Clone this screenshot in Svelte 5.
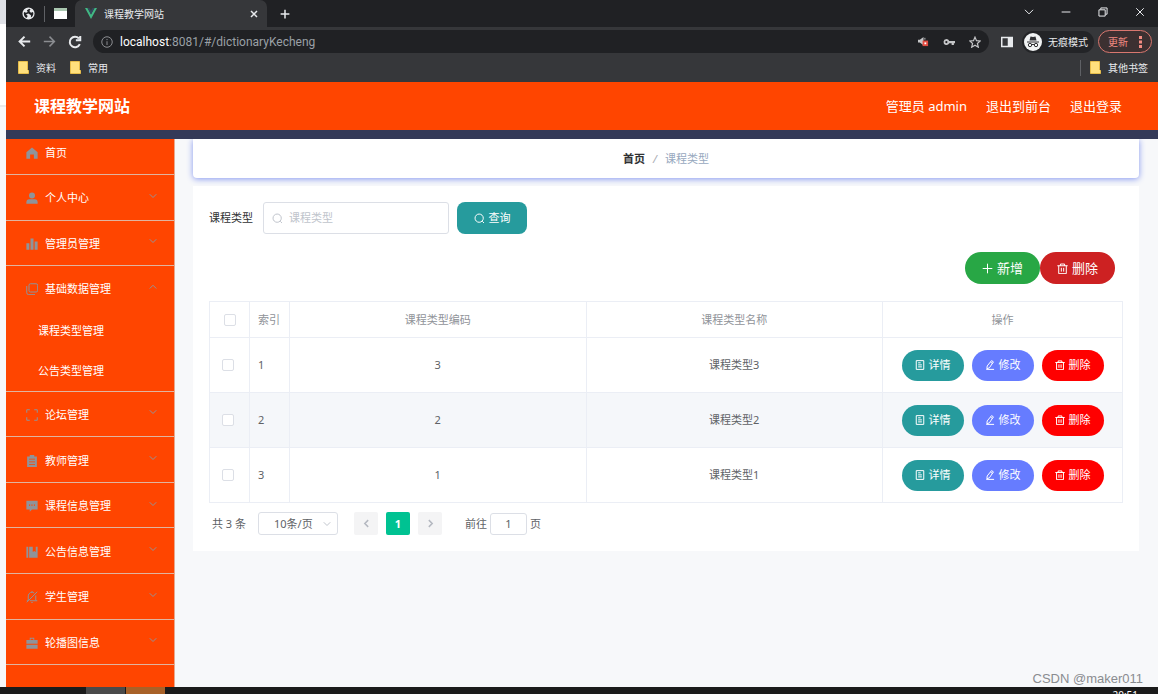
<script>
  const menu = [
    { label: '个人中心', icon: 'user' },
    { label: '管理员管理', icon: 'bars' },
    { label: '基础数据管理', icon: 'copy', children: ['课程类型管理', '公告类型管理'] },
    { label: '论坛管理', icon: 'frame' },
    { label: '教师管理', icon: 'clipboard' },
    { label: '课程信息管理', icon: 'chat' },
    { label: '公告信息管理', icon: 'book' },
    { label: '学生管理', icon: 'bell' },
    { label: '轮播图信息', icon: 'case' }
  ];
  const rows = [
    { index: 1, code: 3, name: '课程类型3' },
    { index: 2, code: 2, name: '课程类型2' },
    { index: 3, code: 1, name: '课程类型1' }
  ];
  // 16-unit grid; solid shapes are filled, the others are stroked
  const icons = {
    home: { solid: true, d: 'M8 .5 15.500 7V15.500H10.500V10H5.500V15.500H.5V7Z' },
    user: { solid: true, d: 'M8 .5a4 4 0 1 1 0 8 4 4 0 0 1 0-8ZM.5 15.500v-2q0-4 4-4h7q4 0 4 4v2Z' },
    bars: { solid: true, d: 'M.5 7H4.500v8.500H.5ZM6 .5h4v15H6ZM11.500 4.500h4v11h-4Z' },
    copy: { d: 'M6 1h7.500a2 2 0 0 1 2 2v7a2 2 0 0 1-2 2H6a2 2 0 0 1-2-2V3a2 2 0 0 1 2-2ZM1 4v9a2.500 2.500 0 0 0 2.500 2.500H12' },
    frame: { d: 'M1 5V1h4M11 1h4v4M15 11v4h-4M5 15H1v-4' },
    clipboard: { solid: true, d: 'M5 0h6v2h3.500v14h-13V2H5ZM4 5v1h8V5ZM4 8.500v1h8v-1ZM4 12v1h8v-1Z' },
    chat: { solid: true, d: 'M.5 1h15v11.500H8L5 15.500v-3H.5ZM4 6v1.500h1.500V6ZM7.200 6v1.500h1.500V6ZM10.500 6v1.500H12V6Z' },
    book: { solid: true, d: 'M.5 1H3v14.500H.5ZM4.200 1H9v7l2-1.500L13 8V1h2.500v14.500H4.200Z' },
    bell: { d: 'M1 15 15 1M3 12V6.500a5 5 0 0 1 8-3.800M13 6v7H5M1 13h2M13 13h2M7 15.500h2M8 0v1.500' },
    case: { solid: true, d: 'M5 1h6v3h4.500v5H.5V4H5ZM6.200 2.200V4h3.600V2.200ZM.5 10.200h15V15.500H.5Z' },
    search: { d: 'M7.500 1.500a6 6 0 1 1 0 12 6 6 0 0 1 0-12ZM12 12l2.500 2.500' },
    plus: { d: 'M8 1v14M1 8h14' },
    trash: { d: 'M.5 4h15M5 4V1.500h6V4M2.500 4v11.500h11V4M6.300 7v5.500M9.700 7v5.500' },
    doc: { d: 'M2 1h12v14H2ZM5 4.500h4M5 7.800h6M5 11h6' },
    edit: { d: 'M10.500 1 13.500 3 7 12.500 3 14l.5-4.500ZM2 15h12.500M9 3.500l3 2' },
    down: { d: 'M1.500 4.500 8 11l6.500-6.500' },
    up: { d: 'M1.500 11 8 4.500l6.500 6.500' },
    left: { d: 'M11 2 5 8l6 6' },
    right: { d: 'M5 2l6 6-6 6' },
    back: { d: 'M15 8H2M8 2 2 8l6 6' },
    forward: { d: 'M1 8h13M8 2l6 6-6 6' },
    reload: { d: 'M13.500 10.500A6 6 0 1 1 12.500 4M14 1v5H9' },
    close: { d: 'M2 2l12 12M14 2 2 14' },
    minus: { d: 'M1 8h14' },
    restore: { d: 'M1.500 4.500h10v10h-10ZM4.500 4V1.500h10v10H12' },
    info: { d: 'M8 1a7 7 0 1 1 0 14A7 7 0 0 1 8 1ZM8 7v5M8 4v1.500' },
    star: { d: 'M8 1.500l2 4.700 5 .4-3.800 3.300 1.200 5L8 12.200l-4.400 2.700 1.200-5L1 6.600l5-.4Z' },
    key: { solid: true, d: 'M4.500 4a4 4 0 0 1 3.800 2.700H16v3h-1.500V12h-3V9.700H8.300A4 4 0 1 1 4.500 4ZM4.500 6.500a1.500 1.500 0 1 0 0 3 1.500 1.500 0 0 0 0-3Z' },
    panel: { solid: true, d: 'M0 1h16v14H0ZM2 3v10h7V3Z' },
    globe: { solid: true, d: 'M8 .5a7.500 7.500 0 1 1 0 15 7.500 7.500 0 0 1 0-15ZM9 2l-3 2 1 2-2 1-2.500-1C1.500 9 3 12 5.500 13.500L7 11 5 9l3-1 3 2v3c3-2 3.500-5 2.500-7L11 7 9 5l1.500-2Z' }
  };
  let keyword = $state('');
  let size = $state('10条/页');
  let page = $state('1');
</script>

{#snippet icon(name, px = 12, weight = 1)}
  <svg class="icon" width={px} height={px} viewBox="0 0 16 16" aria-hidden="true"
    fill={icons[name].solid ? 'currentColor' : 'none'}
    stroke={icons[name].solid ? 'none' : 'currentColor'}
    stroke-width={(weight * 16) / px} fill-rule="evenodd"><path d={icons[name].d} /></svg>
{/snippet}

{#snippet folder()}
  <svg class="icon" width="11" height="13" viewBox="0 0 11 13" aria-hidden="true"><path d="M.5.500h9v8l1 1v3H.5Z" fill="#ffe07d" stroke="#e7bd4a" /></svg>
{/snippet}

<div class="screen">
  <div class="desk">
    <div class="behind"><i></i><b></b></div>
    <div class="window">
      <div class="tabs">
        <div class="pins">
          {@render icon('globe', 13)}
          <span class="rule"></span>
          <svg width="13" height="11" viewBox="0 0 13 11" aria-hidden="true"><path fill="#fff" d="M0 0h13v11H0Z" /><path fill="#a9c7b0" d="M0 0h13v3H0Z" /></svg>
        </div>
        <div class="tab">
          <svg width="12" height="11" viewBox="0 0 12 11" aria-hidden="true"><path fill="#41b883" d="M0 0h2.500L6 6.500 9.500 0H12L6 11Z" /><path fill="#34495e" d="M2.500 0h2L6 2.700 7.500 0h2L6 6.500Z" /></svg>
          <span>课程教学网站</span>
          <button aria-label="关闭标签页">{@render icon('close', 8, 1.5)}</button>
        </div>
        <button class="newtab" aria-label="新标签页">{@render icon('plus', 10, 1.5)}</button>
        <div class="winctl">
          <button aria-label="搜索标签页">{@render icon('down', 10)}</button>
          <button aria-label="最小化">{@render icon('minus', 10)}</button>
          <button aria-label="还原">{@render icon('restore', 10)}</button>
          <button aria-label="关闭">{@render icon('close', 10)}</button>
        </div>
      </div>
      <div class="toolbar">
        <button aria-label="后退">{@render icon('back', 13, 2)}</button>
        <button class="dim" aria-label="前进">{@render icon('forward', 13, 1.5)}</button>
        <button aria-label="刷新">{@render icon('reload', 14, 2)}</button>
        <div class="url">
          <span class="dim">{@render icon('info', 12)}</span>
          <span class="addr">localhost<em>:8081/#/dictionaryKecheng</em></span>
          <svg width="11" height="11" viewBox="0 0 12 12" aria-hidden="true"><path d="M0 4h2l4-3v9L2 7H0Z" fill="#c5c6c8" /><path d="M7.500 2v2" stroke="#c5c6c8" /><path fill="#e24b40" d="M5 5h6v6H5Z" /><path fill="#fff" d="M7 7h2v2H7Z" /></svg>
          {@render icon('key', 12)}
          {@render icon('star', 12, 1.2)}
        </div>
        <span class="panel">{@render icon('panel', 12)}</span>
        <div class="incog">
          <svg width="18" height="18" viewBox="0 0 18 18" aria-hidden="true"><circle cx="9" cy="9" r="9" fill="#f1f3f4" /><path fill="#303134" d="M6.500 3.500 9 4l2.500-.5 1 4h-7ZM3 8.500h12v1H3Z" /><g fill="none" stroke="#303134"><circle cx="6" cy="12" r="1.700" /><circle cx="12" cy="12" r="1.700" /><path d="M7.700 11.500h2.600" /></g></svg>
          <span>无痕模式</span>
        </div>
        <button class="update">更新<svg width="3" height="12" viewBox="0 0 3 12" aria-hidden="true"><path fill="currentColor" d="M0 0h3v3H0ZM0 4.500h3v3H0ZM0 9h3v3H0Z" /></svg></button>
      </div>
      <div class="marks">
        <a href="#a">{@render folder()}资料</a>
        <a href="#b">{@render folder()}常用</a>
        <a class="other" href="#c">{@render folder()}其他书签</a>
      </div>

      <header>
        <h1>课程教学网站</h1>
        <span>管理员 admin</span>
        <a href="#front">退出到前台</a>
        <a href="#logout">退出登录</a>
      </header>

      <div class="body">
        <nav>
          <a class="first" href="#home">{@render icon('home')}<span>首页</span></a>
          {#each menu as item}
            <button class="item" class:open={item.children}>
              {@render icon(item.icon)}<span>{item.label}</span>
              {@render icon(item.children ? 'up' : 'down', 8)}
            </button>
            {#if item.children}
              <div class="sub">
                {#each item.children as child}<a href="#sub">{child}</a>{/each}
              </div>
            {/if}
          {/each}
          <div class="tail"></div>
        </nav>

        <main>
          <div class="crumbs"><strong>首页</strong><i>/</i><span>课程类型</span></div>
          <section>
            <div class="query">
              <label for="kw">课程类型</label>
              <div class="field">{@render icon('search', 11)}<input id="kw" placeholder="课程类型" bind:value={keyword} /></div>
              <button class="find">{@render icon('search', 11)}查询</button>
            </div>
            <div class="actions">
              <button class="add">{@render icon('plus', 11)}新增</button>
              <button class="del">{@render icon('trash', 11)}删除</button>
            </div>
            <table>
              <colgroup><col class="c1" /><col class="c1" /><col /><col /><col class="c5" /></colgroup>
              <thead>
                <tr><th><input type="checkbox" aria-label="全选" /></th><th class="idx">索引</th><th>课程类型编码</th><th>课程类型名称</th><th>操作</th></tr>
              </thead>
              <tbody>
                {#each rows as row}
                  <tr class:alt={row.index === 2}>
                    <td class="pick"><input type="checkbox" aria-label="选择第{row.index}行" /></td>
                    <td class="idx">{row.index}</td>
                    <td>{row.code}</td>
                    <td>{row.name}</td>
                    <td>
                      <div class="ops">
                        <button class="view">{@render icon('doc', 10)}详情</button>
                        <button class="edit">{@render icon('edit', 10)}修改</button>
                        <button class="drop">{@render icon('trash', 10)}删除</button>
                      </div>
                    </td>
                  </tr>
                {/each}
              </tbody>
            </table>
            <div class="pager">
              <span class="total">共 3 条</span>
              <div class="size">
                <select aria-label="每页条数" bind:value={size}><option>10条/页</option></select>
                {@render icon('down', 8)}
              </div>
              <button aria-label="上一页">{@render icon('left', 9, 1.5)}</button>
              <button class="on">1</button>
              <button aria-label="下一页">{@render icon('right', 9, 1.5)}</button>
              <label for="goto">前往</label><input id="goto" bind:value={page} /><span>页</span>
            </div>
          </section>
        </main>
      </div>
    </div>
  </div>
  <div class="taskbar"><i class="t1"></i><i class="t2"></i><span>20:51</span></div>
  <div class="mark">CSDN @maker011</div>
</div>

<style>
  :global(body) { margin: 0; }
  * { box-sizing: border-box; }
  .screen {
    position: relative; display: flex; flex-direction: column; height: 100vh; overflow: hidden;
    background: #f7f8fa; color: #606266;
    font: 11px/16px "Noto Sans", "Noto Sans CJK SC", sans-serif;
  }
  button, input, select { font: inherit; color: inherit; border: 0; padding: 0; background: none; margin: 0; outline: 0; }
  button { display: flex; align-items: center; justify-content: center; white-space: nowrap; }
  a { color: inherit; text-decoration: none; }
  svg { flex: none; display: block; }
  .desk { flex: 1; min-height: 0; display: flex; }
  .behind { width: 6px; display: flex; flex-direction: column; }
  .behind i { height: 24px; background: #dfe1e6; }
  .behind b { height: 83px; background: #fff; border-bottom: 2px solid #e9eaec; }
  .window { flex: 1; min-width: 0; display: flex; flex-direction: column; }

  .tabs { display: flex; align-items: center; height: 27px; background: #202124; color: #e8eaed; font-size: 10px; }
  .pins { display: flex; align-items: center; gap: 9px; width: 69px; padding-left: 16px; }
  .rule { width: 1px; height: 16px; background: #5f6165; }
  .tab { display: flex; align-items: center; gap: 7px; align-self: stretch; width: 192px; padding: 0 9px 0 10px; border-radius: 7px 7px 0 0; background: #36373a; }
  .tab button { margin-left: auto; }
  .newtab { margin-left: 13px; }
  .winctl { display: flex; gap: 27px; margin: 0 13px 4px auto; }
  .toolbar { display: flex; align-items: center; height: 29px; padding: 0 6px 0 12px; background: #36373a; color: #e8eaed; font-size: 10px; }
  .toolbar > button:not(.update) { width: 13px; margin-right: 12px; }
  .dim { color: #8b8d91; }
  .url { flex: 1; display: flex; align-items: center; gap: 14px; height: 23px; padding: 0 8px; margin-right: 12px; border-radius: 12px; background: #202124; color: #c5c6c8; }
  .addr { flex: 1; margin-left: -7px; font-family: Roboto, sans-serif; font-size: 12px; color: #fff; }
  .addr em { font-style: normal; color: #9aa0a6; }
  .incog { display: flex; align-items: center; gap: 6px; height: 22px; margin: 0 4px 0 9px; padding: 0 6px 0 2px; border-radius: 11px; background: #232427; white-space: nowrap; }
  .update { gap: 11px; width: 54px; height: 23px; border: 1px solid #d9776f; border-radius: 12px; color: #f28b82; background: #3c3031; }
  .marks { display: flex; align-items: center; gap: 14px; height: 26px; padding: 0 10px 3px 12px; background: #36373a; color: #e8eaed; font-size: 10px; }
  .marks a { display: flex; align-items: center; gap: 7px; }
  .marks .other { margin-left: auto; padding-left: 9px; border-left: 1px solid #5f6165; }

  header { display: flex; align-items: center; gap: 19px; height: 57px; padding: 0 36px 0 28px; border-bottom: 9px solid #343a58; background: #ff4500; color: #fff; font-size: 13px; }
  h1 { margin: 0 auto 0 0; font-size: 16px; line-height: 24px; }
  .body { flex: 1; min-height: 0; display: flex; }
  nav { width: 169px; display: flex; flex-direction: column; background: #ff4500; border-right: 1px solid #e8a98e; color: #fff; }
  nav > a, .item { display: flex; align-items: center; justify-content: flex-start; gap: 7px; padding: 0 17px 0 20px; border-bottom: 1px solid #e0b49f; }
  nav .icon { color: #909399; }
  nav .first { height: 36px; padding-bottom: 8px; }
  .item { flex: 1; min-height: 0; padding-top: 2px; text-align: left; }
  .item span { flex: 1; }
  .item > :global(.icon:last-child) { margin-bottom: 5px; }
  .item.open { border-bottom-color: transparent; }
  .sub { height: 80px; display: flex; flex-direction: column; border-bottom: 1px solid #e0b49f; }
  .sub a { flex: 1; display: flex; align-items: center; padding-left: 32px; }
  .tail { height: 22px; }

  main { flex: 1; min-width: 0; padding: 0 19px 0 18px; }
  .crumbs { position: relative; display: flex; align-items: center; justify-content: center; gap: 8px; height: 39px; background: #fff; border-radius: 0 0 4px 4px; box-shadow: 0 1px 6px #8496f0; clip-path: inset(0 -8px -8px); color: #97a8be; }
  .crumbs strong { color: #303133; }
  .crumbs i { color: #a8abb2; }
  section { margin-top: 8px; padding: 16px; background: #fff; }
  .query { display: flex; align-items: center; }
  .query label { margin-right: 10px; color: #303133; }
  .field { display: flex; align-items: center; gap: 6px; width: 186px; height: 32px; padding: 0 8px; border: 1px solid #dcdfe6; border-radius: 3px; color: #c0c4cc; }
  .field input { flex: 1; min-width: 0; color: #606266; }
  .field input::placeholder { color: #c0c4cc; opacity: 1; }
  .find { width: 70px; height: 32px; margin-left: 8px; gap: 4px; border-radius: 8px; background: #269b9d; color: #fff; }
  .actions { display: flex; justify-content: flex-end; margin: 18px 8px 17px 0; }
  .actions button { width: 75px; height: 32px; gap: 4px; border-radius: 16px; color: #fff; font-size: 13px; }
  .actions .add { background: #28a745; }
  .actions .del { background: #cd2122; }
  table { width: 100%; table-layout: fixed; border-collapse: collapse; text-align: center; }
  .c1 { width: 40px; }
  .c5 { width: 240px; }
  th, td { padding: 0; border: 1px solid #ebeef5; }
  th { height: 36px; font-weight: 400; color: #909399; }
  td { height: 55px; }
  .alt { background: #f5f7fa; }
  .idx { text-align: left; padding-left: 8px; }
  .pick { padding-right: 3px; }
  input[type='checkbox'] { appearance: none; display: block; width: 12px; height: 12px; margin: 0 auto; border: 1px solid #dcdfe6; border-radius: 2px; background: #fff; }
  .ops { display: flex; justify-content: center; gap: 8px; }
  .ops button { width: 62px; height: 31px; gap: 4px; border-radius: 16px; color: #fff; }
  .view { background: #269b9d; }
  .edit { background: #667cff; }
  .drop { background: #ff0000; }
  .pager { display: flex; align-items: center; height: 23px; margin-top: 9px; padding-left: 3px; }
  .total { margin-right: 12px; }
  .size { display: flex; align-items: center; width: 80px; height: 23px; padding: 0 6px 0 15px; margin-right: 16px; border: 1px solid #dcdfe6; border-radius: 3px; color: #c0c4cc; }
  .size select { flex: 1; min-width: 0; appearance: none; color: #606266; }
  .pager button { width: 24px; height: 23px; margin-right: 8px; border-radius: 2px; background: #f4f4f5; color: #b4b8c0; }
  .pager .on { background: #00c292; color: #fff; font-weight: 700; }
  .pager label { margin: 0 3px 0 15px; }
  .pager input { width: 37px; height: 22px; margin-right: 3px; border: 1px solid #dcdfe6; border-radius: 3px; text-align: center; }

  .taskbar { display: flex; height: 7px; overflow: hidden; background: #1b1b1b; padding: 0 20px 0 86px; color: #fff; font-size: 10px; }
  .taskbar i { width: 39px; margin-right: 1px; background: #4a4a4a; }
  .taskbar .t2 { background: #a86128; }
  .taskbar span { margin-left: auto; }
  .mark { position: absolute; right: 15px; bottom: 7px; font: 13px/16px "Liberation Sans", sans-serif; color: #8a8c90; }
</style>
